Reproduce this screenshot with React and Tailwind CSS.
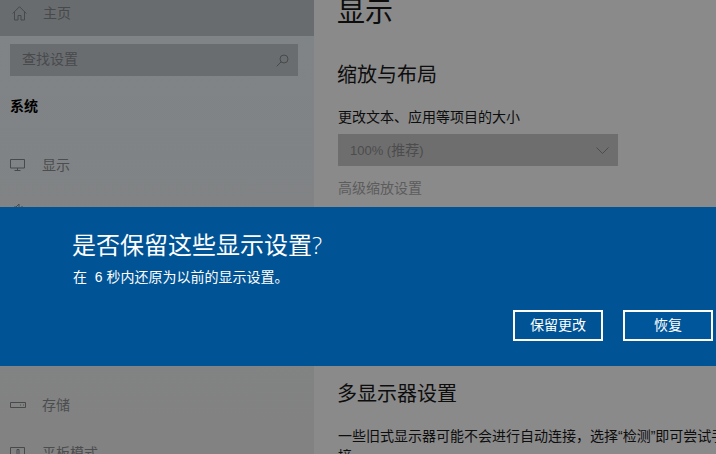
const font = { fontFamily: '"Liberation Sans", "Noto Sans CJK SC", sans-serif' };

function NavItem({ icon, label, className }) {
  return (
    <div className={`flex items-center h-[20px] pl-[10px] text-[14px] leading-[20px] text-[#4b4d4e] ${className}`}>
      <span className="w-[32px] flex items-center">{icon}</span>
      <span>{label}</span>
    </div>
  );
}

export default function App() {
  return (
    <div className="relative w-[716px] h-[454px] overflow-hidden bg-[#8a8a8a] text-black" style={font}>
      <div className="flex h-full">
        <aside className="w-[314px] shrink-0 h-full overflow-hidden bg-gradient-to-b from-[#7f8486] via-[#818385] to-[#828282]">
          <div className="h-[36px] bg-[#696c6e] flex items-center pl-[12px] text-[14px] leading-[20px] text-[#47494a]">
            <span className="w-[31px] -mt-[10px]">
              <svg width="15" height="15" viewBox="0 0 15 15" fill="none" stroke="#47494a" strokeWidth="1">
                <path d="M.7 7.5 7.5.7l6.8 6.8M2.5 5.8V14H6V9.5h3V14h3.5V5.8" />
              </svg>
            </span>
            <span className="-mt-[10px]">主页</span>
          </div>
          <div className="mt-[8px] ml-[10px] w-[288px] h-[32px] bg-[#6a6d70] flex items-center justify-between pl-[12px] pr-[9px] text-[14px] leading-[20px] text-[#484a4c]">
            <span className="-mt-[2px]">查找设置</span>
            <svg width="13" height="13" viewBox="0 0 13 13" fill="none" stroke="#47494a" strokeWidth="1">
              <circle cx="8" cy="5" r="4" />
              <path d="M5.2 7.8 0.7 12.3" />
            </svg>
          </div>
          <div className="mt-[20px] ml-[10px] h-[20px] leading-[20px] text-[14px] font-bold text-black">系统</div>
          <NavItem
            className="mt-[39px]"
            label="显示"
            icon={
              <svg width="15" height="12" viewBox="0 0 15 12" fill="none" stroke="#47494a" strokeWidth="1">
                <path d="M.5.5h14v8.5H.5zM7.5 9v2.5M4.5 11.5h6" />
              </svg>
            }
          />
          <div className="mt-[29px] ml-[13px] h-[10px]">
            <svg width="12" height="10" viewBox="0 0 12 10" fill="none" stroke="#47494a" strokeWidth="1">
              <path d="M1 7V3h2l3-3v6M9 2v4" />
            </svg>
          </div>
          <NavItem
            className="mt-[181px]"
            label="存储"
            icon={
              <svg width="16" height="7" viewBox="0 0 16 7" fill="none" stroke="#47494a" strokeWidth="1">
                <path d="M.5.5h15v5H.5zM10 3h1M13 3h1" />
              </svg>
            }
          />
          <NavItem
            className="mt-[28px]"
            label="平板模式"
            icon={
              <svg width="15" height="13" viewBox="0 0 15 13" fill="none" stroke="#47494a" strokeWidth="1">
                <path d="M.5 12V.5h14V12M7 8V2.5h2V8M5 12V8h6v4" />
              </svg>
            }
          />
        </aside>

        <main className="w-[440px] shrink-0 pl-[24px]">
          <h1 className="text-[28px] leading-[40px] font-normal -mt-[7px] -ml-px text-[#0d0d0d]">显示</h1>
          <h2 className="mt-[28px] -ml-px text-[20px] leading-[28px] font-normal text-[#0d0d0d]">缩放与布局</h2>
          <p className="mt-[18px] text-[14px] leading-[20px] text-[#0d0d0d]">更改文本、应用等项目的大小</p>
          <div className="mt-[7px] w-[280px] h-[32px] bg-[#6e6e6e] flex items-center justify-between pl-[12px] pr-[9px] text-[14px] leading-[20px] text-[#4c4c4c]">
            <span><span className="text-[13px]">100% (</span>推荐<span className="text-[13px]">)</span></span>
            <svg width="13" height="7" viewBox="0 0 13 7" fill="none" stroke="#4c4c4c" strokeWidth="1">
              <path d="M.5.5l6 6 6-6" />
            </svg>
          </div>
          <p className="mt-[12px] text-[14px] leading-[20px] text-[#5c5c5c]">高级缩放设置</p>
          <h2 className="mt-[182px] -ml-px text-[20px] leading-[28px] font-normal text-[#0d0d0d]">多显示器设置</h2>
          <p className="mt-[18px] w-[426px] text-[14px] leading-[20px] text-[#0d0d0d]">
            一些旧式显示器可能不会进行自动连接，选择“检测”即可尝试手动连接。
          </p>
        </main>
      </div>

      <section className="absolute left-0 top-[207px] w-full h-[159px] bg-[#005496] text-white">
        <div className="pl-[72px] pt-[21px] text-[24px] leading-[34px]">
          是否保留这些显示设置<span className="font-['Open_Sans'] font-light">?</span>
        </div>
        <div className="pl-[73px] mt-[2px] text-[14px] leading-[24px] whitespace-pre">在  6 秒内还原为以前的显示设置。</div>
        <div className="absolute right-[3px] top-[103px] flex gap-[20px]">
          <button className="w-[90px] h-[31px] border-2 border-white text-[14px] bg-[#005496]">保留更改</button>
          <button className="w-[90px] h-[31px] border-2 border-white text-[14px] bg-[#00569b]">恢复</button>
        </div>
      </section>
    </div>
  );
}
